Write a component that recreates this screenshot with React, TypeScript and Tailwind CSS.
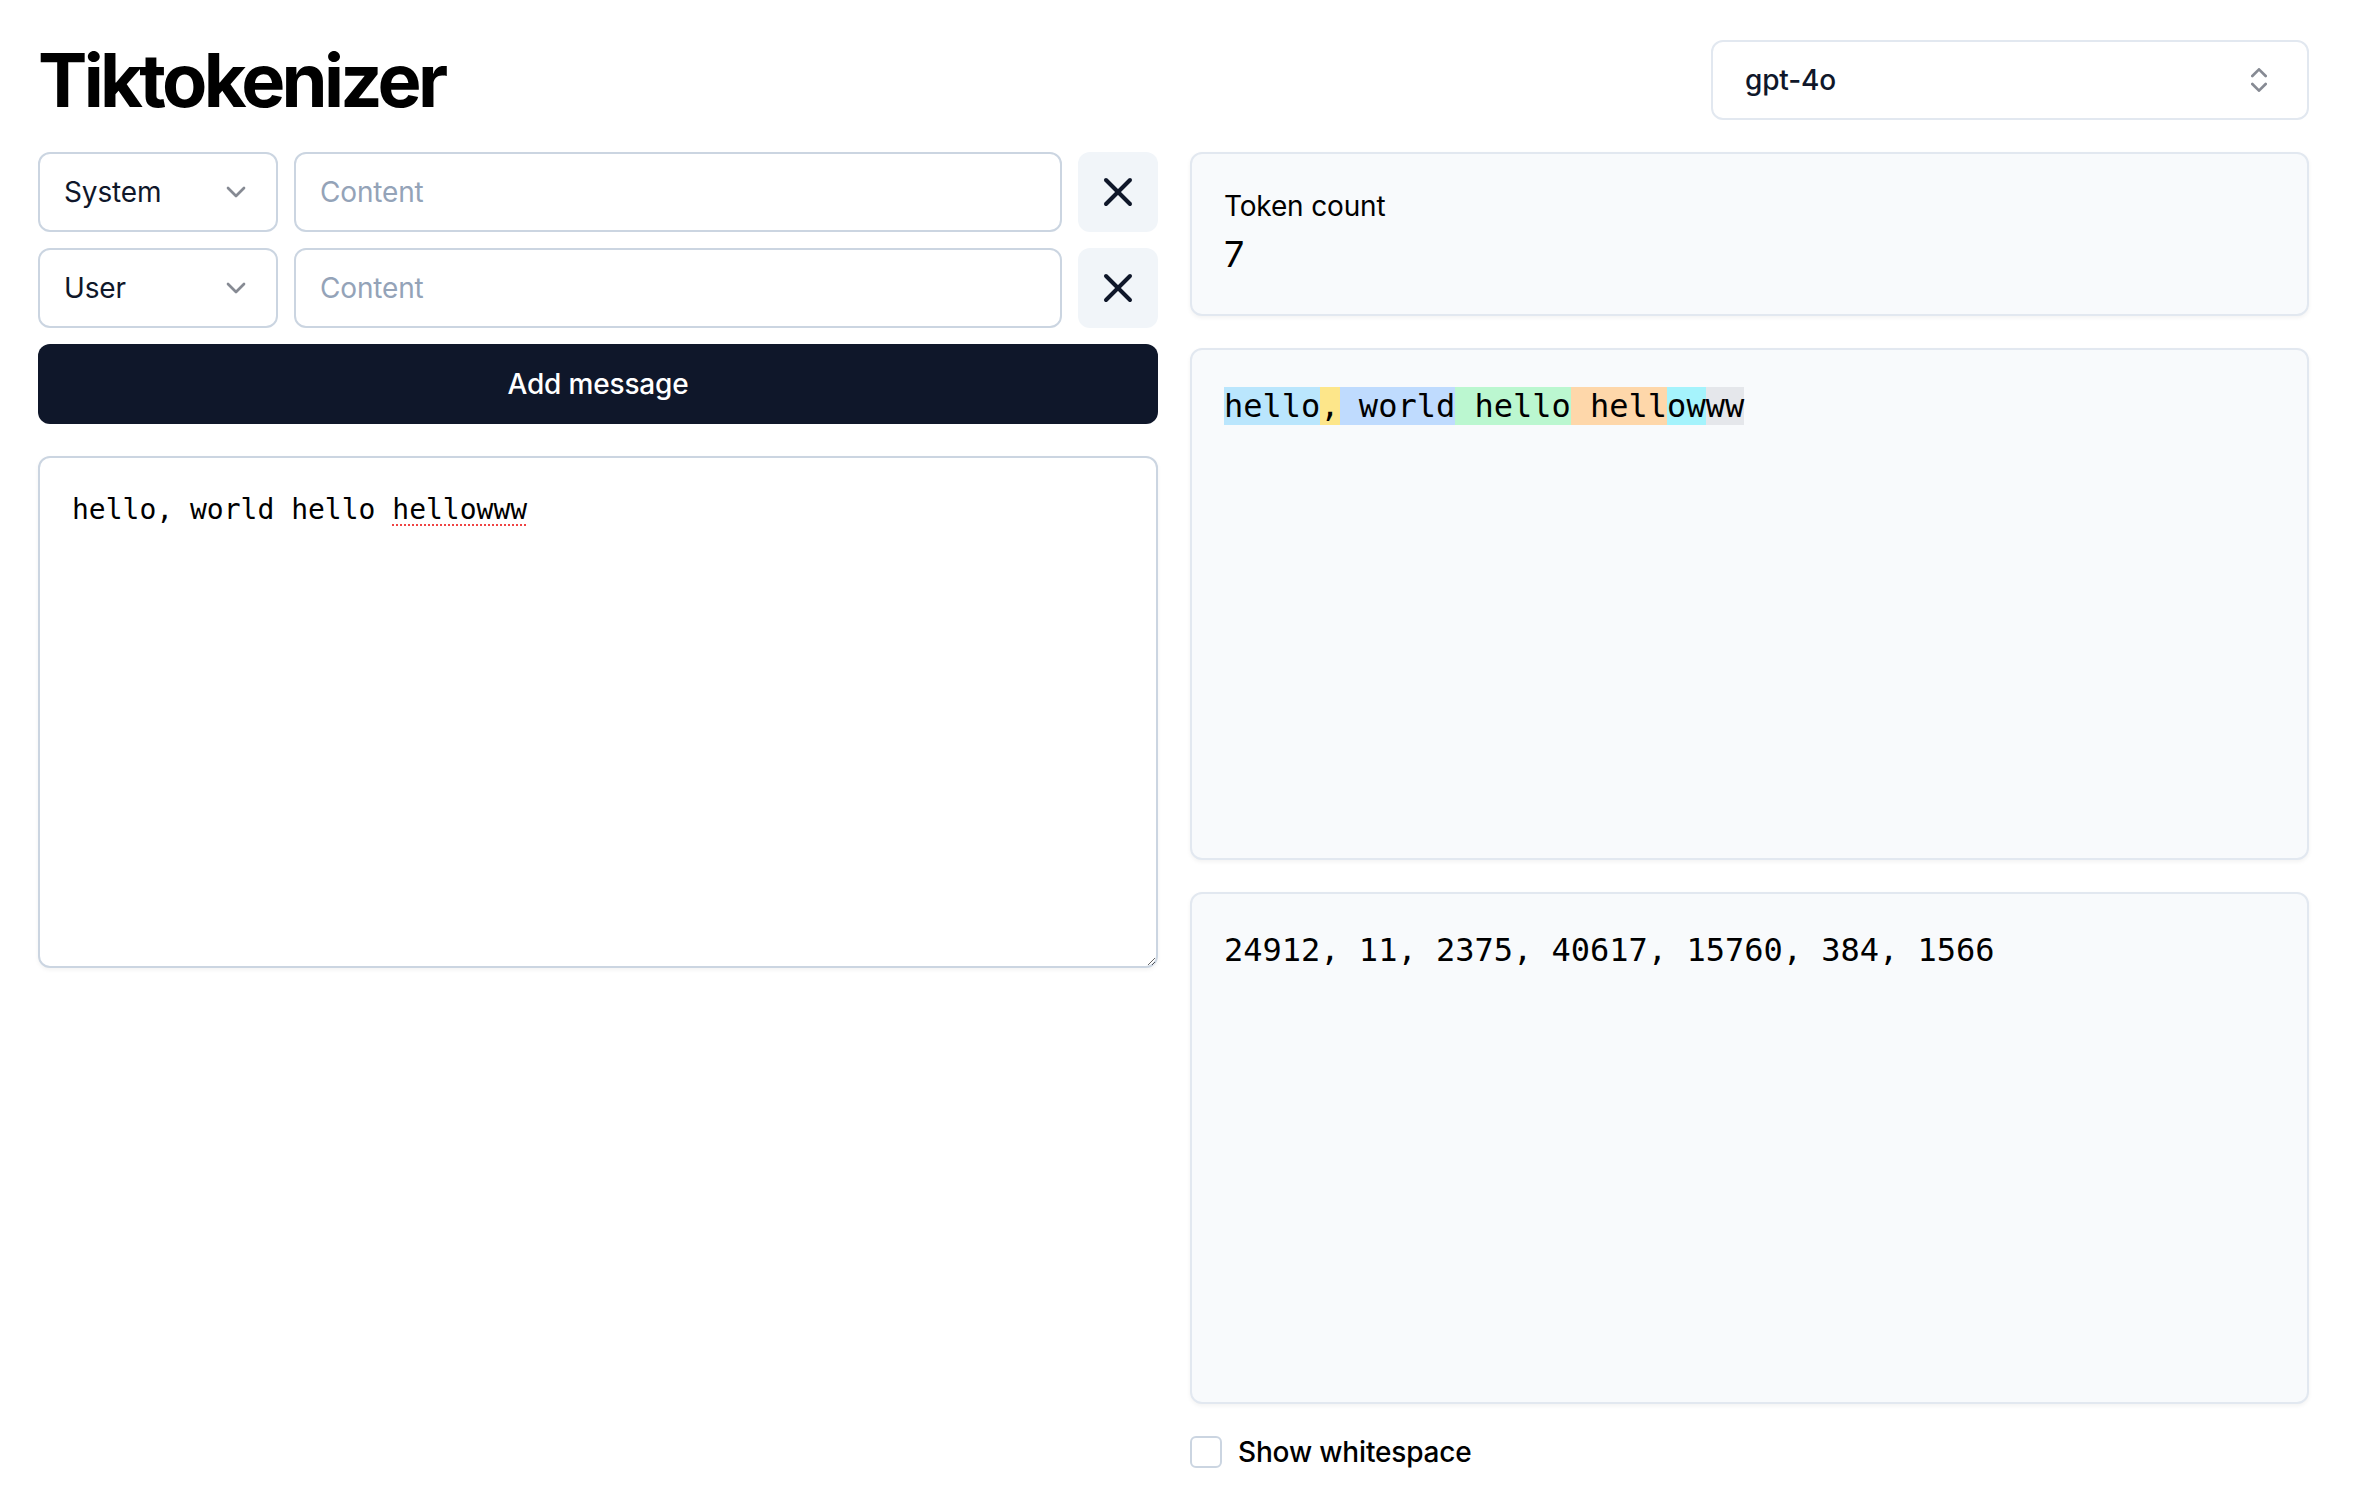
import { X, ChevronDown, ChevronsUpDown } from "lucide-react";

const tokens = [
  { text: "hello", cls: "bg-[#bae6fd]" },
  { text: ",", cls: "bg-[#fde68a]" },
  { text: " world", cls: "bg-[#bfdbfe]" },
  { text: " hello", cls: "bg-[#bbf7d0]" },
  { text: " hell", cls: "bg-[#fed7aa]" },
  { text: "ow", cls: "bg-[#a5f3fc]" },
  { text: "ww", cls: "bg-[#e5e7eb]" },
];

const tokenIds = [24912, 11, 2375, 40617, 15760, 384, 1566];

const messages = [{ role: "System" }, { role: "User" }];

function MessageRow({ role }: { role: string }) {
  return (
    <div className="flex gap-4">
      <button className="flex h-20 w-[240px] shrink-0 items-center justify-between rounded-xl border-2 border-[#cbd5e1] bg-white px-6 text-[28px] text-[#0f172a]">
        <span>{role}</span>
        <ChevronDown size={32} className="opacity-50" />
      </button>
      <input
        className="h-20 min-w-0 flex-1 rounded-xl border-2 border-[#cbd5e1] bg-white px-6 text-[28px] text-[#0f172a] outline-none placeholder:text-[#94a3b8]"
        placeholder="Content"
      />
      <button className="flex h-20 w-20 shrink-0 items-center justify-center rounded-xl bg-[#f1f5f9] text-[#0f172a]">
        <X size={48} />
      </button>
    </div>
  );
}

export default function App() {
  const mono = "font-['DejaVu_Sans_Mono','Liberation_Mono',monospace] tracking-normal";
  return (
    <main className="min-h-screen bg-white pt-10 pl-[38px] font-['Inter','Noto_Sans',sans-serif] tracking-[-0.01em] text-black">
      <div className="flex w-[2271px] flex-col gap-8">
        <header className="flex h-20 items-center justify-between">
          <h1 className="text-[74px] leading-none font-bold tracking-[-0.05em]">Tiktokenizer</h1>
          <button className="flex h-20 w-[598px] items-center justify-between rounded-xl border-2 border-[#e2e8f0] bg-white px-8 text-[28px] font-medium text-[#0f172a]">
            <span>gpt-4o</span>
            <ChevronsUpDown size={32} className="opacity-50" />
          </button>
        </header>

        <div className="grid grid-cols-[1120px_1119px] items-start gap-8">
          <section className="flex flex-col gap-8">
            <div className="flex flex-col gap-4">
              {messages.map((m) => (
                <MessageRow key={m.role} role={m.role} />
              ))}
              <button className="h-20 w-full rounded-xl bg-[#0f172a] text-[28px] font-medium text-white">
                Add message
              </button>
            </div>

            <div className="relative">
              <textarea
                className={`block h-[512px] w-full resize-y rounded-xl border-2 border-[#cbd5e1] bg-white p-8 text-[28px] leading-[40px] text-black shadow-[0_2px_4px_0_rgba(0,0,0,0.05)] outline-none ${mono}`}
                spellCheck={false}
                defaultValue="hello, world hello hellowww"
              />
              <div
                className={`pointer-events-none absolute inset-0 border-2 border-transparent p-8 text-[28px] leading-[40px] text-transparent ${mono}`}
              >
                hello, world hello{" "}
                <span className="underline decoration-[#ef4444] decoration-dotted decoration-2 underline-offset-[5px]">
                  hellowww
                </span>
              </div>
            </div>
          </section>

          <section className="flex flex-col gap-8">
            <div className="flex flex-col rounded-xl border-2 border-[#e2e8f0] bg-[#f8fafc] p-8 shadow-[0_2px_4px_0_rgba(0,0,0,0.05)]">
              <p className="text-[28px] leading-[40px]">Token count</p>
              <p className="text-[36px] leading-[56px]">7</p>
            </div>

            <pre
              className={`min-h-[512px] rounded-xl border-2 border-[#e2e8f0] bg-[#f8fafc] p-8 text-[32px] leading-[48px] whitespace-pre-wrap break-all shadow-[0_2px_4px_0_rgba(0,0,0,0.05)] ${mono}`}
            >
              {tokens.map((t, i) => (
                <span key={i} className={t.cls}>
                  {t.text}
                </span>
              ))}
            </pre>

            <pre
              className={`min-h-[512px] rounded-xl border-2 border-[#e2e8f0] bg-[#f8fafc] p-8 text-[32px] leading-[48px] whitespace-pre-wrap shadow-[0_2px_4px_0_rgba(0,0,0,0.05)] ${mono}`}
            >
              {tokenIds.join(", ")}
            </pre>

            <div className="flex items-center gap-4">
              <div className="h-8 w-8 rounded-md border-2 border-[#cbd5e1] bg-white" />
              <label className="text-[28px] leading-none font-medium">Show whitespace</label>
            </div>
          </section>
        </div>
      </div>
    </main>
  );
}
